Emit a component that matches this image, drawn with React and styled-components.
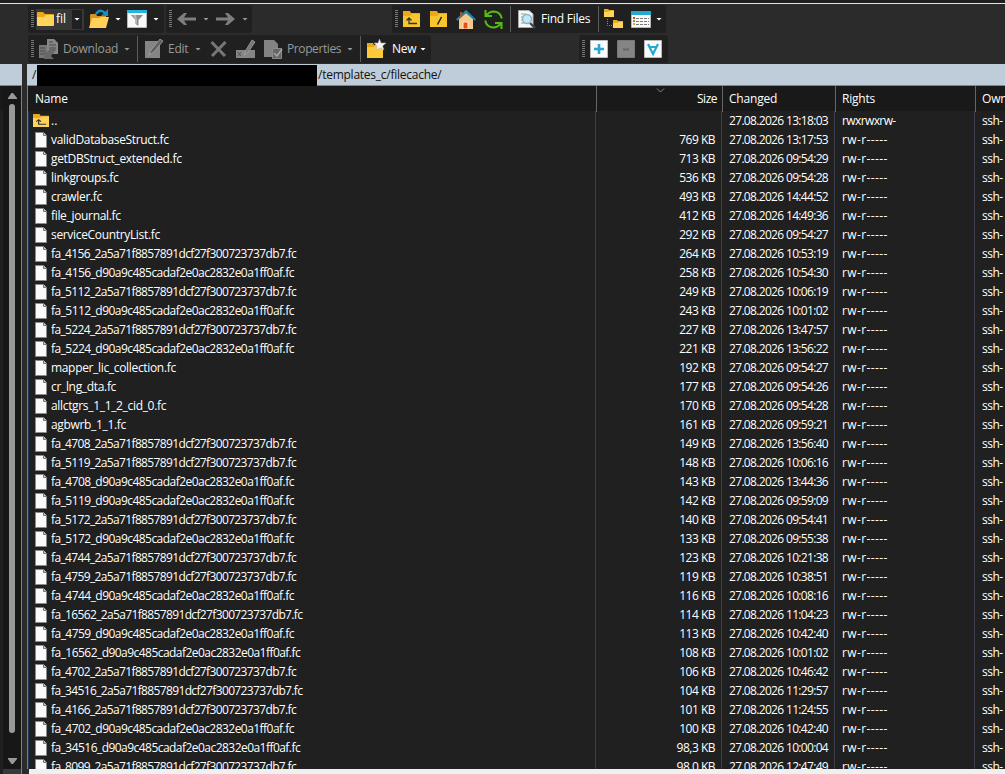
import styled, { createGlobalStyle } from "styled-components";

const names = `validDatabaseStruct|769 KB|13:17:53
getDBStruct_extended|713 KB|09:54:29
linkgroups|536 KB|09:54:28
crawler|493 KB|14:44:52
file_journal|412 KB|14:49:36
serviceCountryList|292 KB|09:54:27
fa_4156_2a5a71f8857891dcf27f300723737db7|264 KB|10:53:19
fa_4156_d90a9c485cadaf2e0ac2832e0a1ff0af|258 KB|10:54:30
fa_5112_2a5a71f8857891dcf27f300723737db7|249 KB|10:06:19
fa_5112_d90a9c485cadaf2e0ac2832e0a1ff0af|243 KB|10:01:02
fa_5224_2a5a71f8857891dcf27f300723737db7|227 KB|13:47:57
fa_5224_d90a9c485cadaf2e0ac2832e0a1ff0af|221 KB|13:56:22
mapper_lic_collection|192 KB|09:54:27
cr_lng_dta|177 KB|09:54:26
allctgrs_1_1_2_cid_0|170 KB|09:54:28
agbwrb_1_1|161 KB|09:59:21
fa_4708_2a5a71f8857891dcf27f300723737db7|149 KB|13:56:40
fa_5119_2a5a71f8857891dcf27f300723737db7|148 KB|10:06:16
fa_4708_d90a9c485cadaf2e0ac2832e0a1ff0af|143 KB|13:44:36
fa_5119_d90a9c485cadaf2e0ac2832e0a1ff0af|142 KB|09:59:09
fa_5172_2a5a71f8857891dcf27f300723737db7|140 KB|09:54:41
fa_5172_d90a9c485cadaf2e0ac2832e0a1ff0af|133 KB|09:55:38
fa_4744_2a5a71f8857891dcf27f300723737db7|123 KB|10:21:38
fa_4759_2a5a71f8857891dcf27f300723737db7|119 KB|10:38:51
fa_4744_d90a9c485cadaf2e0ac2832e0a1ff0af|116 KB|10:08:16
fa_16562_2a5a71f8857891dcf27f300723737db7|114 KB|11:04:23
fa_4759_d90a9c485cadaf2e0ac2832e0a1ff0af|113 KB|10:42:40
fa_16562_d90a9c485cadaf2e0ac2832e0a1ff0af|108 KB|10:01:02
fa_4702_2a5a71f8857891dcf27f300723737db7|106 KB|10:46:42
fa_34516_2a5a71f8857891dcf27f300723737db7|104 KB|11:29:57
fa_4166_2a5a71f8857891dcf27f300723737db7|101 KB|11:24:55
fa_4702_d90a9c485cadaf2e0ac2832e0a1ff0af|100 KB|10:42:40
fa_34516_d90a9c485cadaf2e0ac2832e0a1ff0af|98,3 KB|10:00:04
fa_8099_2a5a71f8857891dcf27f300723737db7|98,0 KB|12:47:49`;

const files = names.split("\n").map((line) => {
  const [name, size, time] = line.split("|");
  return { name: name + ".fc", size, time };
});

// long hash names are set tighter than the plain ones
const tracking = (name) => {
  if (name.includes("_2a5a")) return -0.64;
  if (name.includes("_d90a")) return -0.54;
  return -0.33;
};

function App() {
  return (
    <Window>
      <GlobalStyle />
      <TopEdge />
      <ToolRow>
        <ToolPanel $left={28} $width={136}>
          <Grip />
          <Combo>
            <FolderIcon />
            <ComboText>fil</ComboText>
            <ComboButton><Caret /></ComboButton>
          </Combo>
          <Slot $gap={5}><OpenIcon /></Slot>
          <Slot $gap={6}><Caret /></Slot>
          <Slot $gap={6}><FilterIcon /></Slot>
          <Slot $gap={6}><Caret /></Slot>
        </ToolPanel>
        <ToolPanel $left={2} $width={86}>
          <Grip />
          <Slot $gap={4}><ArrowIcon /></Slot>
          <Slot $gap={7}><Caret $dim /></Slot>
          <Slot $gap={7}><ArrowIcon right /></Slot>
          <Slot $gap={7}><Caret $dim /></Slot>
        </ToolPanel>
        <ToolPanel $left={140} $width={274}>
          <Grip />
          <Slot $gap={4}><UpIcon /></Slot>
          <Slot $gap={10}><RootIcon /></Slot>
          <Slot $gap={9}><HomeIcon /></Slot>
          <Slot $gap={8}><RefreshIcon /></Slot>
          <Slot $gap={7}><Divider /></Slot>
          <Slot $gap={7}><FindIcon /></Slot>
          <Label $gap={4} $width={57}>Find Files</Label>
          <Divider />
          <Slot $gap={5}><TreeIcon /></Slot>
          <Slot $gap={7}><TableIcon /></Slot>
          <Slot $gap={5}><Caret /></Slot>
        </ToolPanel>
      </ToolRow>
      <ToolRow>
        <ToolPanel $left={28} $width={403}>
          <Grip />
          <Slot $gap={3}><DownloadIcon /></Slot>
          <Label $gap={5} $width={61} $dim $track={-0.2}>Download</Label>
          <Caret $dim />
          <Slot $gap={7}><Divider /></Slot>
          <Slot $gap={7}><EditIcon /></Slot>
          <Label $gap={4} $width={27} $dim>Edit</Label>
          <Caret $dim />
          <Slot $gap={9}><DeleteIcon /></Slot>
          <Slot $gap={9}><RenameIcon /></Slot>
          <Slot $gap={8}><PropertiesIcon /></Slot>
          <Label $gap={3} $width={60} $dim $track={-0.4}>Properties</Label>
          <Caret $dim />
          <Slot $gap={7}><Divider /></Slot>
          <Slot $gap={5}><NewIcon /></Slot>
          <Label $gap={5} $width={28}>New</Label>
          <Caret />
        </ToolPanel>
        <ToolPanel $left={148} $width={89}>
          <Grip />
          <Slot $gap={4}><SelectIcon kind="plus" /></Slot>
          <Slot $gap={9}><SelectIcon kind="minus" /></Slot>
          <Slot $gap={9}><SelectIcon kind="filter" /></Slot>
        </ToolPanel>
      </ToolRow>
      <Panes>
        <LeftPane>
          <PathBar />
          <LeftBody>
            <LeftList />
            <ScrollBar>
              <svg width="9" height="6"><path d="M0 6V5L3.5 0H5L9 5V6Z" fill="#999" /></svg>
              <Thumb />
              <svg width="9" height="6"><path d="M0 0V1L3.5 6H5L9 1V0Z" fill="#999" /></svg>
            </ScrollBar>
          </LeftBody>
        </LeftPane>
        <RightPane>
          <PathBar>
            <PathText $width={9}>/</PathText>
            <Redacted />
            <PathText>/templates_c/filecache/</PathText>
          </PathBar>
          <Header>
            <HeadCell>Name</HeadCell>
            <HeadCell $right>
              <SortMark width="9" height="6" viewBox="0 0 9 6">
                <path d="M1 .5 4.5 4 8 .5" fill="none" stroke="#888" />
              </SortMark>
              Size
            </HeadCell>
            <HeadCell>Changed</HeadCell>
            <HeadCell>Rights</HeadCell>
            <HeadCell>Own</HeadCell>
          </Header>
          <Body>
            <Row>
              <NameCell $up $track={0}><UpIcon small />..</NameCell>
              <Cell />
              <DateCell>27.08.2026 13:18:03</DateCell>
              <RightsCell $track={-0.6}>rwxrwxrw-</RightsCell>
              <Cell>ssh-</Cell>
            </Row>
            {files.map((f) => (
              <Row key={f.name}>
                <NameCell $track={tracking(f.name)}><FileIcon />{f.name}</NameCell>
                <SizeCell>{f.size}</SizeCell>
                <DateCell>27.08.2026 {f.time}</DateCell>
                <RightsCell $track={0.4}>rw-r-----</RightsCell>
                <Cell>ssh-</Cell>
              </Row>
            ))}
          </Body>
          <Footer />
        </RightPane>
      </Panes>
    </Window>
  );
}

export default App;

const yellow = "#f9c52e";

function FolderIcon() {
  return (
    <svg width="17" height="14" viewBox="0 0 17 14">
      <path d="M0 1Q0 0 1 0H6L8 2H16Q17 2 17 3V13H0Z" fill="#eda818" />
      <path d="M0 5H7L9 3H17V13Q17 14 16 14H1Q0 14 0 13Z" fill="#ffd45c" />
    </svg>
  );
}

function OpenIcon() {
  return (
    <svg width="20" height="20" viewBox="0 0 20 20">
      <path d="M1 6 2 5H7L8 7H17V18H1Z" fill="#d8951c" />
      <path d="M3 9H10L12 8H20L17 19H0Z" fill="#ffd15a" />
      <path d="M7 5Q11-1 16 4" fill="none" stroke="#168fc0" strokeWidth="2.4" />
      <path d="M19 0V7H12Z" fill="#168fc0" />
    </svg>
  );
}

function FilterIcon() {
  return (
    <svg width="20" height="18" viewBox="0 0 20 18">
      <path d="M.5.5H19.5V17.5H.5Z" fill="#fafafa" stroke="#b8b8b8" />
      <path d="M0 0H20V3H0Z" fill="#25b5dc" />
      <path d="M4 5H16L11.5 10V16L8.5 14V10Z" fill="#8c8c8c" />
      <path d="M6 5H9L10 10V14L8.5 13V10Z" fill="#b9b9b9" />
    </svg>
  );
}

function ArrowIcon({ right }) {
  return (
    <svg width="19" height="14" viewBox="0 0 19 14">
      <path
        d={right ? "M19 7 12 1H9L12 5.5H0V8.5H12L9 13H12Z" : "M0 7 7 1H10L7 5.5H19V8.5H7L10 13H7Z"}
        fill="#7e7e7e"
      />
    </svg>
  );
}

function UpIcon({ small }) {
  return (
    <svg width={small ? 16 : 17} height={small ? 13 : 16} viewBox="0 0 17 16" preserveAspectRatio="none">
      <path d="M0 0H7L8 2H17V16H0Z" fill="#eda818" />
      <path d="M0 5H7L9 3H17V16H0Z" fill={small ? "#ffd45c" : yellow} />
      <path d="M6 7V12.5H14M3.5 9.5 6 7 8.5 9.5" fill="none" stroke="#333" strokeWidth="1.3" />
    </svg>
  );
}

function RootIcon() {
  return (
    <svg width="17" height="16" viewBox="0 0 17 16">
      <path d="M0 0H7L8 2H17V16H0Z" fill="#eda818" />
      <path d="M0 5H7L9 3H17V16H0Z" fill={yellow} />
      <path d="M7.5 13.5 11.5 6" stroke="#222" strokeWidth="1.5" />
    </svg>
  );
}

function HomeIcon() {
  return (
    <svg width="20" height="19" viewBox="0 0 20 19">
      <path d="M3 9 10 3 17 9V19H3Z" fill="#f4c98a" />
      <path d="M.8 10 10 1.3 19.2 10" fill="none" stroke="#2188b5" strokeWidth="2" />
      <path d="M4 2H6V6L4 7Z" fill="#b05518" />
      <path d="M7 12H12V19H7Z" fill="#f04d12" stroke="#fbe8cb" />
    </svg>
  );
}

function RefreshIcon() {
  return (
    <svg width="19" height="19" viewBox="0 0 19 19" fill="none" stroke="#54bd10" strokeWidth="2">
      <path d="M1.5 0V6H8M2 6Q5 1.5 10 1.5Q16.5 2 17.8 8.5" />
      <path d="M17.5 19V13H11M17 13Q14 17.5 9 17.5Q2.5 17 1.2 10.5" />
    </svg>
  );
}

function FindIcon() {
  return (
    <svg width="19" height="19" viewBox="0 0 19 19">
      <path d="M.5.5H11L15 4V17.5H.5Z" fill="#f7f7f7" stroke="#aaa" />
      <path d="M3 4H8M3 7H6M3 10H5M3 13H7" stroke="#999" />
      <path d="m12 13 5 5" stroke="#3b4a55" strokeWidth="2.4" />
      <circle cx="9" cy="9" r="4.5" fill="#bfe9f5" stroke="#8bb4c1" strokeWidth="1.4" />
    </svg>
  );
}

function TreeIcon() {
  return (
    <svg width="20" height="20" viewBox="0 0 20 20">
      <path d="M0 0H4L5 1H10V8H0Z" fill="#efab1b" />
      <path d="M0 3H4L6 2H10V8H0Z" fill="#ffd45c" />
      <path d="M9 11H13L14 12H19V19H9Z" fill="#efab1b" />
      <path d="M9 14H13L15 13H19V19H9Z" fill="#ffd45c" />
      <path d="M3.5 10V16.5H8" fill="none" stroke="#888" strokeDasharray="1 1" />
    </svg>
  );
}

function TableIcon() {
  return (
    <svg width="20" height="17" viewBox="0 0 20 17">
      <path d="M.5.5H19.5V16.5H.5Z" fill="#fafafa" stroke="#b8b8b8" />
      <path d="M0 0H20V4H0Z" fill="#25a9d4" />
      <path d="M5 7.5H18M5 10.5H18M5 13.5H18" stroke="#777" strokeDasharray="3 1" />
      <path d="M2 6H4V8H2Z" fill="#e93c19" />
      <path d="M2 9H4V11H2Z" fill="#54ad17" />
      <path d="M2 12H4V14H2Z" fill="#e5a812" />
    </svg>
  );
}

function DownloadIcon() {
  return (
    <svg width="20" height="20" viewBox="0 0 20 20">
      <path d="M9 0H16L20 4V15H9Z" fill="#888" />
      <path d="M1 6H9V19H1Z" fill="#777" />
      <path d="M11 3H15M11 6H18M11 9H18M2 9H7M2 12H6M2 15H7" stroke="#494949" />
      <path d="M6 10 9 13 15 7 18 11 13 17 16 20H6Z" fill="#686868" />
    </svg>
  );
}

function EditIcon() {
  return (
    <svg width="19" height="20" viewBox="0 0 19 20">
      <path d="M0 2H15V19H0Z" fill="#858585" />
      <path d="m4 16 2-5L15 0 18 2 9 13Z" fill="#626262" stroke="#aaa" strokeWidth=".7" />
    </svg>
  );
}

function DeleteIcon() {
  return (
    <svg width="17" height="18" viewBox="0 0 17 18">
      <path d="M1.5 2 15 16M15.5 2 2 16" stroke="#777" strokeWidth="3" />
    </svg>
  );
}

function RenameIcon() {
  return (
    <svg width="20" height="20" viewBox="0 0 20 20">
      <path d="M0 11H19V19H0Z" fill="#858585" />
      <path d="m2 13 3 4m0-4-3 4" stroke="#555" />
      <path d="M8 16 10 11 16 1 19 3 13 12Z" fill="#777" stroke="#aaa" strokeWidth=".7" />
    </svg>
  );
}

function PropertiesIcon() {
  return (
    <svg width="20" height="20" viewBox="0 0 20 20">
      <path d="M0 1H10L14 5V18H0Z" fill="#838383" />
      <path d="M8.5 9.5H17.5V19.5H8.5Z" fill="#666" stroke="#8b8b8b" />
      <path d="m10 14 3 3 5-7" fill="none" stroke="#a5a5a5" strokeWidth="1.5" />
    </svg>
  );
}

function NewIcon() {
  return (
    <svg width="21" height="20" viewBox="0 0 21 20">
      <path d="M1 4H7L8 6H17V19H1Z" fill="#eda818" />
      <path d="M1 8H8L10 6H17V19H1Z" fill="#ffca38" />
      <path d="M13.5 0 15 4 20 4 16.5 7 18 11 14 9 10 11 11 7 8 4H12Z" fill="#f3f3f3" stroke="#aaa" strokeWidth=".5" />
    </svg>
  );
}

function SelectIcon({ kind }) {
  const off = kind === "minus";
  return (
    <svg width="18" height="18" viewBox="0 0 18 18">
      <path d="M.5.5H17.5V17.5H.5Z" fill={off ? "#858585" : "#fafafa"} stroke={off ? "#777" : "#bbb"} />
      {kind === "plus" && <path d="M9 4V14M4 9H14" stroke="#25a8d3" strokeWidth="2.6" />}
      {off && <path d="M6 9.5H12" stroke="#666" strokeWidth="2" />}
      {kind === "filter" && <path d="M4 4 9 14 14 4M6 7H12" fill="none" stroke="#25a8d3" strokeWidth="2.2" />}
    </svg>
  );
}

function FileIcon() {
  return (
    <svg width="12" height="16" viewBox="0 0 12 16">
      <path d="M.5.5H8.5L11.5 3.5V15.5H.5Z" fill="#fafafa" stroke="#8b8b8b" />
      <path d="M8.5 .5V3.5H11.5" fill="#ccc" stroke="#777" />
    </svg>
  );
}

const GlobalStyle = createGlobalStyle`
  * { box-sizing: border-box; }
  body { margin: 0; background: #2b2b2b; }
  svg { display: block; flex: none; }
`

const Window = styled.div`
  width: 1005px;
  height: 774px;
  overflow: hidden;
  display: flex;
  flex-direction: column;
  background: #2b2b2b;
  color: #fff;
  font: 12px/19px "Open Sans", sans-serif;
  white-space: nowrap;
`

const TopEdge = styled.div`
  height: 5px;
  flex: none;
  border-top: 3px solid #202020;
  background: linear-gradient(#e4e4e4 1px, #2b2b2b 1px);
`

const ToolRow = styled.div`
  display: flex;
  height: 28px;
  flex: none;
  margin-bottom: 2px;
`

const ToolPanel = styled.div`
  display: flex;
  align-items: center;
  width: ${(p) => p.$width}px;
  margin-left: ${(p) => p.$left}px;
  padding-left: 3px;
  border-radius: 3px;
  background: #202020;
`

const Grip = styled.div`
  width: 3px;
  height: 18px;
  margin-right: 1px;
  background: repeating-linear-gradient(#777 0 1px, #202020 1px 2px);
`

const Slot = styled.div`
  flex: none;
  margin-left: ${(p) => p.$gap}px;
`

const Divider = styled.div`
  width: 1px;
  height: 26px;
  flex: none;
  background: #5c5c5c;
`

const Caret = styled.div`
  width: 6px;
  height: 3px;
  flex: none;
  background: ${(p) => (p.$dim ? "#999" : "#fff")};
  clip-path: polygon(0 0, 100% 0, 50% 100%);
`

const Label = styled.div`
  flex: none;
  width: ${(p) => p.$width}px;
  margin-left: ${(p) => p.$gap}px;
  padding-bottom: 1px;
  color: ${(p) => (p.$dim ? "#999" : "#fff")};
  letter-spacing: ${(p) => p.$track ?? -0.25}px;
`

const Combo = styled.div`
  display: flex;
  align-items: center;
  width: 48px;
  height: 21px;
  margin-left: 1px;
  padding-left: 1px;
  background: #383838;
`

const ComboText = styled.div`
  width: 17px;
  padding: 0 0 1px 2px;
  overflow: hidden;
`

const ComboButton = styled.div`
  display: flex;
  align-items: center;
  justify-content: center;
  width: 12px;
  height: 21px;
  border: 1px solid #383838;
  background: #202020;
`

const Panes = styled.div`
  display: flex;
  flex: 1;
  margin-top: -1px;
  min-height: 0;
`

const LeftPane = styled.div`
  width: 22px;
  display: flex;
  flex-direction: column;
  margin-right: 5px;
`

const PathBar = styled.div`
  display: flex;
  height: 22px;
  flex: none;
  padding-left: 4px;
  background: #bfcdda;
  border-bottom: 1px solid #80868d;
  color: #111;
`

const PathText = styled.div`
  width: ${(p) => (p.$width ? p.$width - 3 + "px" : "auto")};
  padding-left: 1px;
  line-height: 22px;
  letter-spacing: -0.25px;
`

const Redacted = styled.div`
  width: 280px;
  height: 21px;
  margin-top: 1px;
  background: #000;
`

const LeftBody = styled.div`
  display: flex;
  flex: 1;
  border-right: 1px solid #7b8087;
`

const LeftList = styled.div`
  width: 3px;
  background: linear-gradient(#191919 25px, #202020 25px);
`

const ScrollBar = styled.div`
  display: flex;
  flex-direction: column;
  align-items: center;
  width: 18px;
  padding-top: 7px;
  border-bottom: 5px solid #383838;
  background: #171717;
`

const Thumb = styled.div`
  width: 6px;
  height: 629px;
  margin: 5px 0 25px;
  border-radius: 3px;
  background: #999;
`

const RightPane = styled.div`
  flex: 1;
  min-width: 0;
  display: flex;
  flex-direction: column;
`

const Header = styled.div`
  display: grid;
  grid-template-columns: 569px 126px 113px 140px 29px;
  height: 25px;
  flex: none;
  border-left: 1px solid #7b8087;
  background: #191919;
`

const HeadCell = styled.div`
  position: relative;
  padding: 0 5px 0 ${(p) => (p.$right ? 0 : 6)}px;
  border-right: 1px solid #666;
  line-height: 26px;
  letter-spacing: ${(p) => (p.$right ? -0.5 : -0.2)}px;
  text-align: ${(p) => (p.$right ? "right" : "left")};

  &:first-child { padding-left: 7px; }
  &:last-child { border: 0; padding-right: 0; overflow: hidden; }
`

const SortMark = styled.svg`
  position: absolute;
  left: 59px;
  top: 2px;
`

const Body = styled.div`
  flex: 1;
  min-height: 0;
  overflow: hidden;
  border-left: 1px solid #7b8087;
  background: #202020;
`

const Row = styled.div`
  display: grid;
  grid-template-columns: 568px 126px 113px 140px 30px;
  height: 19px;
`

const Cell = styled.div`
  padding-left: 7px;
  border-right: 1px solid #3a3e48;
  letter-spacing: -0.5px;
  overflow: hidden;

  &:last-child { border: 0; }
`

const NameCell = styled(Cell)`
  display: flex;
  align-items: center;
  gap: ${(p) => (p.$up ? 2 : 4)}px;
  padding-left: ${(p) => (p.$up ? 4 : 6)}px;
  border-left: 1px solid #1b3354;
  letter-spacing: ${(p) => p.$track}px;
`

const SizeCell = styled(Cell)`
  padding-right: 6px;
  text-align: right;
`

const DateCell = styled(Cell)`
  letter-spacing: -0.67px;
`

const RightsCell = styled(Cell)`
  letter-spacing: ${(p) => p.$track}px;
`

const Footer = styled.div`
  height: 5px;
  flex: none;
  margin-left: 2px;
  background: #f0f0f0;
`
